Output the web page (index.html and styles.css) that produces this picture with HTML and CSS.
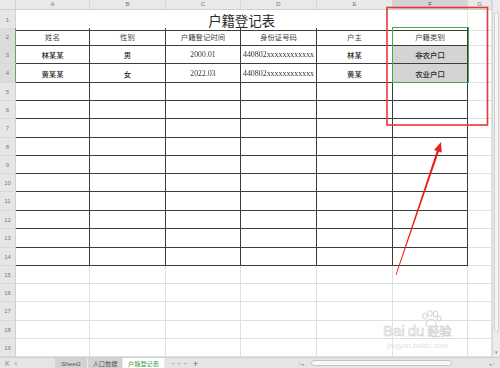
FILE: index.html
```html
<!DOCTYPE html>
<html lang="zh">
<head>
<meta charset="utf-8">
<link rel="stylesheet" href="styles.css">
</head>
<body>
<div class="app">
  <div class="main">
    <div class="sheet">
      <div class="row hdr">
        <div class="corner"></div>
        <div class="ch">A</div><div class="ch">B</div><div class="ch">C</div><div class="ch">D</div><div class="ch">E</div><div class="ch sel">F</div><div class="ch">G</div>
      </div>
      <div class="row r18">
        <div class="rh">1</div><div class="title">户籍登记表</div><div class="c"></div>
      </div>
      <div class="row r18">
        <div class="rh on">2</div>
        <div class="c b h">姓名</div><div class="c b h">性别</div><div class="c b h">户籍登记时间</div><div class="c b h">身份证号码</div><div class="c b h">户主</div><div class="c b h">户籍类别</div><div class="c"></div>
      </div>
      <div class="row r18">
        <div class="rh on">3</div>
        <div class="c b d">林某某</div><div class="c b d">男</div><div class="c b n">2000.01</div><div class="c b n id">440802xxxxxxxxxxxx</div><div class="c b d">林某</div><div class="c b d fill">非农户口</div><div class="c"></div>
      </div>
      <div class="row r19">
        <div class="rh on">4</div>
        <div class="c b d">黄某某</div><div class="c b d">女</div><div class="c b n">2022.03</div><div class="c b n id">440802xxxxxxxxxxxx</div><div class="c b d">黄某</div><div class="c b d fill">农业户口</div><div class="c"></div>
      </div>
      <div class="row r18"><div class="rh">5</div><div class="c b"></div><div class="c b"></div><div class="c b"></div><div class="c b"></div><div class="c b"></div><div class="c b"></div><div class="c"></div></div>
      <div class="row r18"><div class="rh">6</div><div class="c b"></div><div class="c b"></div><div class="c b"></div><div class="c b"></div><div class="c b"></div><div class="c b"></div><div class="c"></div></div>
      <div class="row r19"><div class="rh">7</div><div class="c b"></div><div class="c b"></div><div class="c b"></div><div class="c b"></div><div class="c b"></div><div class="c b"></div><div class="c"></div></div>
      <div class="row r18"><div class="rh">8</div><div class="c b"></div><div class="c b"></div><div class="c b"></div><div class="c b"></div><div class="c b"></div><div class="c b"></div><div class="c"></div></div>
      <div class="row r18"><div class="rh">9</div><div class="c b"></div><div class="c b"></div><div class="c b"></div><div class="c b"></div><div class="c b"></div><div class="c b"></div><div class="c"></div></div>
      <div class="row r18"><div class="rh">10</div><div class="c b"></div><div class="c b"></div><div class="c b"></div><div class="c b"></div><div class="c b"></div><div class="c b"></div><div class="c"></div></div>
      <div class="row r19"><div class="rh">11</div><div class="c b"></div><div class="c b"></div><div class="c b"></div><div class="c b"></div><div class="c b"></div><div class="c b"></div><div class="c"></div></div>
      <div class="row r18"><div class="rh">12</div><div class="c b"></div><div class="c b"></div><div class="c b"></div><div class="c b"></div><div class="c b"></div><div class="c b"></div><div class="c"></div></div>
      <div class="row r19"><div class="rh">13</div><div class="c b"></div><div class="c b"></div><div class="c b"></div><div class="c b"></div><div class="c b"></div><div class="c b"></div><div class="c"></div></div>
      <div class="row r18"><div class="rh">14</div><div class="c b"></div><div class="c b"></div><div class="c b"></div><div class="c b"></div><div class="c b"></div><div class="c b"></div><div class="c"></div></div>
      <div class="row r18"><div class="rh">15</div><div class="c"></div><div class="c"></div><div class="c"></div><div class="c"></div><div class="c"></div><div class="c"></div><div class="c"></div></div>
      <div class="row r18"><div class="rh">16</div><div class="c"></div><div class="c"></div><div class="c"></div><div class="c"></div><div class="c"></div><div class="c"></div><div class="c"></div></div>
      <div class="row r19"><div class="rh">17</div><div class="c"></div><div class="c"></div><div class="c"></div><div class="c"></div><div class="c"></div><div class="c"></div><div class="c"></div></div>
      <div class="row r18"><div class="rh">18</div><div class="c"></div><div class="c"></div><div class="c"></div><div class="c"></div><div class="c"></div><div class="c"></div><div class="c"></div></div>
      <div class="row r18"><div class="rh">19</div><div class="c"></div><div class="c"></div><div class="c"></div><div class="c"></div><div class="c"></div><div class="c"></div><div class="c"></div></div>
    </div>
    <div class="vscroll">
      <div class="vthumb"></div>
      <div class="varrow">▾</div>
    </div>
  </div>
  <div class="tabbar">
    <div class="nav"><span>K</span><span>‹</span></div>
    <div class="tab">Sheet2</div>
    <div class="tab">人口数据</div>
    <div class="tab active">户籍登记表</div>
    <div class="more">···</div>
    <div class="plus">+</div>
    <div class="hnav">⁞ ◂</div>
    <div class="hscroll"></div>
    <div class="hnav2">◂ ⁞</div>
  </div>

  <div class="selection"></div>
  <div class="watermark">
    <svg class="paw" width="22" height="18" viewBox="0 0 22 18">
      <g fill="none" stroke="#cfcfcf" stroke-width="1">
        <ellipse cx="5" cy="6" rx="2.2" ry="3"/>
        <ellipse cx="10" cy="3.5" rx="2.2" ry="3"/>
        <ellipse cx="15.5" cy="4" rx="2.2" ry="3"/>
        <ellipse cx="19" cy="8.5" rx="2" ry="2.6"/>
        <path d="M6 15 C6 10 10 8.5 12 9.5 C15 10.5 17 13 15.5 15.5 C14 17.5 7.5 17.5 6 15 Z"/>
      </g>
    </svg>
    <div class="wm-main">Bai<span class="du">du</span><span class="jy">经验</span></div>
    <div class="wm-sub">jingyan.baidu.com</div>
  </div>
  <svg class="annot" width="500" height="368" viewBox="0 0 500 368">
    <rect x="387" y="7.5" width="100.5" height="117.5" fill="none" stroke="#e53935" stroke-width="1.6"/>
    <polygon points="396.4,275 395.6,274.8 436.7,150.9 434,150 441,142 441.8,152.6 438.9,151.7" fill="#e8231f"/>
  </svg>
</div>
</body>
</html>
```

FILE: styles.css
```css
* { box-sizing: border-box; }
html, body { margin: 0; padding: 0; background: #fff; }
body {
  font-family: "Noto Sans CJK SC", "Noto Sans", sans-serif;
  color: #222;
}
.app {
  position: relative;
  width: 500px;
  height: 368px;
  overflow: hidden;
  display: flex;
  flex-direction: column;
}
.main {
  display: flex;
  height: 357px;
}
.sheet {
  width: 492px;
  display: flex;
  flex-direction: column;
}
.row {
  display: grid;
  grid-template-columns: 16px 74px 76px 75px 76px 76px 75px 24px;
}
.r18 { height: 18px; }
.r19 { height: 19px; }
.hdr {
  height: 10px;
  background: #e9e9e9;
  border-bottom: 1px solid #cfcfcf;
}
.corner { border-right: 1px solid #d2d2d2; }
.ch {
  font-family: "Liberation Sans", sans-serif;
  font-size: 6px;
  line-height: 9px;
  color: #777;
  text-align: center;
  border-right: 1px solid #d6d6d6;
}
.ch.sel { background: #d3d3d3; color: #555; }
.rh {
  background: #e6e6e6;
  border-right: 1px solid #d0d0d0;
  border-bottom: 1px solid #d8d8d8;
  font-family: "Liberation Sans", sans-serif;
  font-size: 6px;
  color: #777;
  display: flex;
  align-items: center;
  justify-content: center;
}
.rh.on {
  background: #dcdcdc;
  border-right: 1.5px solid #5cae5f;
}
.c {
  border-right: 1px solid #e0e0e0;
  border-bottom: 1px solid #e0e0e0;
  display: flex;
  align-items: center;
  justify-content: center;
  font-size: 7.4px;
  white-space: nowrap;
  overflow: hidden;
}
.c.b {
  border-right-color: #3c3c3c;
  border-bottom-color: #3c3c3c;
}
.title {
  grid-column: span 6;
  border-bottom: 1px solid #3c3c3c;
  border-right: 1px solid #e8e8e8;
  display: flex;
  align-items: center;
  justify-content: center;
  font-size: 13.5px;
  color: #2a2a2a;
  letter-spacing: -0.2px;
}
.h { color: #444; font-weight: 400; }
.d { color: #2a2a2a; font-weight: 500; }
.n {
  font-family: "Liberation Serif", serif;
  font-size: 7.6px;
  color: #333;
  letter-spacing: 0.1px;
  will-change: transform;
}
.id { font-size: 8px; letter-spacing: -0.05px; }
.fill { background: #d4d4d4; }

.vscroll {
  width: 8px;
  height: 357px;
  background: #ececec;
  border-left: 1px solid #d9d9d9;
  display: flex;
  flex-direction: column;
  align-items: center;
  padding-top: 12px;
}
.vthumb {
  width: 5px;
  height: 320px;
  background: #f7f7f7;
  border: 1px solid #cdcdcd;
  border-radius: 3px;
}
.varrow {
  margin-top: auto;
  margin-bottom: 2px;
  font-size: 5px;
  color: #888;
  line-height: 6px;
}

.tabbar {
  height: 11px;
  background: #e5e5e5;
  border-top: 1px solid #d0d0d0;
  display: flex;
  align-items: stretch;
  font-size: 6.2px;
  color: #555;
}
.nav {
  width: 55px;
  display: flex;
  gap: 5px;
  padding-left: 5px;
  align-items: center;
  font-family: "Liberation Sans", sans-serif;
  font-size: 7px;
  color: #888;
}
.tab {
  display: flex;
  align-items: center;
  justify-content: center;
  background: #d2d2d2;
  color: #555;
  border-right: 1px solid #e9e9e9;
  font-family: "Liberation Sans", "Noto Sans CJK SC", sans-serif;
}
.tab:nth-of-type(2) { width: 33px; }
.tab:nth-of-type(3) { width: 35px; }
.tab.active {
  width: 42px;
  background: #fff;
  color: #3aa43f;
  font-family: "Noto Sans CJK SC", sans-serif;
}
.more {
  margin-left: 5px;
  color: #888;
  display: flex;
  align-items: center;
  font-size: 6px;
}
.plus {
  margin-left: 5px;
  color: #666;
  display: flex;
  align-items: center;
  font-size: 9px;
  line-height: 9px;
}
.hnav {
  margin-left: 101px;
  width: 12px;
  color: #999;
  font-size: 5px;
  display: flex;
  align-items: center;
}
.hscroll {
  margin-top: 2px;
  width: 141px;
  height: 6px;
  background: #f8f8f8;
  border: 1px solid #c4c4c4;
  border-radius: 3px;
}
.hnav2 {
  margin-left: 37px;
  color: #999;
  font-size: 5px;
  display: flex;
  align-items: center;
}

.selection {
  position: absolute;
  left: 392px;
  top: 27px;
  width: 77px;
  height: 56px;
  border: 1.5px solid #45a84b;
  pointer-events: none;
}
.annot {
  position: absolute;
  left: 0;
  top: 0;
  pointer-events: none;
}
.watermark {
  position: absolute;
  left: 383px;
  top: 310px;
  width: 100px;
  color: transparent;
  pointer-events: none;
}
.paw {
  position: absolute;
  left: 37px;
  top: 0;
}
.wm-main {
  position: absolute;
  left: 0;
  top: 13px;
  font-family: "Liberation Sans", sans-serif;
  font-size: 15px;
  line-height: 16px;
  color: #fbfbfb;
  -webkit-text-stroke: 0.6px #cfcfcf;
  white-space: nowrap;
}
.du { margin-left: 3px; }
.jy {
  margin-left: 3px;
  font-family: "Noto Sans CJK SC", sans-serif;
  font-size: 12px;
}
.wm-sub {
  position: absolute;
  left: 4px;
  top: 31px;
  font-family: "Liberation Sans", sans-serif;
  font-size: 7.5px;
  color: #e2e2e2;
  white-space: nowrap;
}
```
